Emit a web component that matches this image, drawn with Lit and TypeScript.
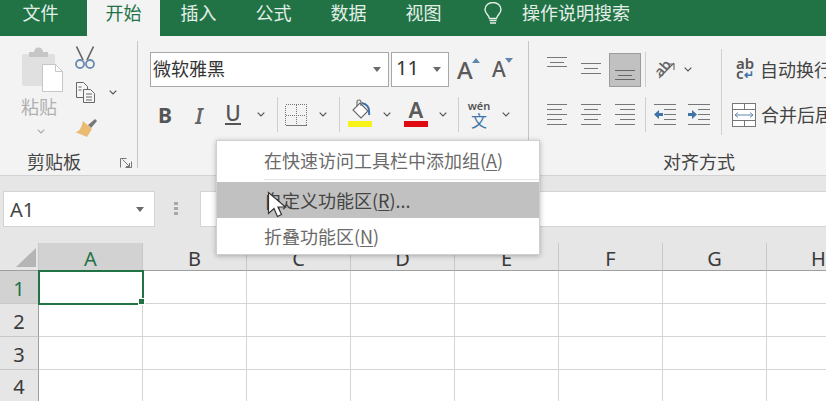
import { LitElement, html, css, svg } from "lit";
import { customElement } from "lit/decorators.js";

const chev = () => html`<svg class="chev" width="8" height="5" viewBox="0 0 8 5"><path d="M.7.7 4 4 7.3.7" fill="none" stroke="currentColor" stroke-width="1.200"/></svg>`;
const caret = () => html`<svg width="8" height="5" viewBox="0 0 8 5"><path d="M0 0h8L4 5z" fill="#6a6a6a"/></svg>`;

// Horizontal rule icons for the alignment group: each entry is [x1, x2, y]
const rules = (w: number, h: number, list: number[][], color = "#777") => html`<svg width=${w} height=${h} viewBox="0 0 ${w} ${h}" shape-rendering="crispEdges">${list.map(
  ([a, b, y]) => svg`<line x1=${a} x2=${b} y1=${y + 0.5} y2=${y + 0.5} stroke=${color}/>`
)}</svg>`;

const stack = (ys: number[], w: number, inset: number) =>
  ys.map((y, i) => [i % 2 ? inset : 0, i % 2 ? w - inset : w, y]);
const five = [0, 5, 10, 15, 20];

const arrowIndent = (dir: "l" | "r") => html`<svg width="22" height="22" viewBox="0 0 22 22" class="block">
  <g stroke="#777" shape-rendering="crispEdges">
    <line x1="0" x2="22" y1="0.500" y2="0.500"/><line x1="10" x2="22" y1="5.500" y2="5.500"/>
    <line x1="10" x2="22" y1="10.500" y2="10.500"/><line x1="10" x2="22" y1="15.500" y2="15.500"/>
    <line x1="0" x2="22" y1="20.500" y2="20.500"/>
  </g>
  ${dir === "l"
    ? svg`<path d="M0 10.500 5 6v3h4v3H5v3z" fill="#3f74a8"/>`
    : svg`<path d="M9 10.500 4 6v3H0v3h4v3z" fill="#3f74a8"/>`}
</svg>`;

@customElement("app-root")
export class AppRoot extends LitElement {
  static styles = css`
    :host { display: block; width: 826px; height: 401px; overflow: hidden; position: relative; background: #fff;
      font-family: "Noto Sans CJK SC", "Noto Sans", sans-serif; color: #444; }
    svg { display: block; flex: none; }
    .chev { color: #555; }
    .tabs { height: 36px; background: #217346; display: flex; padding-left: 4px; box-sizing: border-box; color: #e4efe8; font-size: 18px; line-height: 25px; gap: 2px; }
    .tab { width: 73px; text-align: center; }
    .tab.first { margin-right: 8px; }
    .tab.on { background: #f3f3f3; color: #217346; }
    .lamp { margin: 2px 18px 0 22px; }
    .ribbon { height: 140px; box-sizing: border-box; background: #f3f3f3; border-bottom: 1px solid #d2d2d2; padding-top: 5px; display: flex; overflow: hidden; }
    .group { height: 127px; flex: none; display: flex; flex-direction: column; box-sizing: border-box; }
    .sepr { border-right: 1px solid #c6c6c6; }
    .g1 { width: 138px; } .g2 { width: 391px; } .g3 { width: 340px; }
    .body { height: 109px; flex: none; display: flex; }
    .foot { height: 18px; line-height: 22px; font-size: 18px; text-align: center; color: #444; position: relative; }
    .g1 .foot { width: 108px; }
    .launch { position: absolute; left: 120px; top: 8px; }
    .paste { margin-left: 22px; width: 53px; padding-top: 5px; display: flex; flex-direction: column; }
    .paste span { font-size: 18px; line-height: 24px; color: #b0b0b0; margin: 1px 0 0 -1px; white-space: nowrap; }
    .paste .chev { margin: 11px 0 0 15px; color: #ababab; }
    .tools { display: flex; flex-direction: column; padding-top: 5px; gap: 12px; }
    .tool { height: 23px; display: flex; align-items: center; }
    .tool .chev { margin-left: 13px; }
    .rows { display: flex; flex-direction: column; padding-top: 11px; gap: 10px; }
    .g2 .rows { padding-left: 12px; }
    .row { display: flex; height: 35px; align-items: center; }
    .box { height: 35px; box-sizing: border-box; background: #fff; border: 1px solid #a8a8a8; display: flex; align-items: center; justify-content: space-between; padding: 0 7px 0 2px; font-size: 18px; color: #333; }
    .box span { padding-bottom: 4px; }
    .fname { width: 239px; margin-right: 2px; }
    .fsize { width: 58px; font-size: 20px; font-family: "Noto Sans", sans-serif; padding-left: 4px; }
    .big { font-family: "Noto Sans", sans-serif; font-weight: 500; color: #5a5a5a; position: relative; line-height: 35px; }
    .grow { font-size: 24px; margin-left: 8px; width: 35px; }
    .shrink { font-size: 21px; width: 24px; }
    .tri { position: absolute; top: 6px; }
    .grow .tri { left: 15px; } .shrink .tri { left: 13px; }
    .c { display: flex; align-items: center; justify-content: center; height: 35px; flex: none; }
    .w6 { width: 6px; } .w10 { width: 10px; } .w12 { width: 12px; } .w18 { width: 18px; } .w22 { width: 22px; }
    .w24 { width: 24px; } .w26 { width: 26px; } .w28 { width: 28px; } .w30 { width: 30px; } .w32 { width: 32px; }
    .w36 { width: 36px; } .w38 { width: 38px; } .w40 { width: 40px; } .w8 { width: 8px; }
    .vs { width: 1px; height: 35px; background: #cfcfcf; }
    .bt { font-family: "Noto Sans", sans-serif; font-size: 21px; color: #555; font-weight: 700; line-height: 1; padding-top: 2px; box-sizing: border-box; }
    .bi { font-family: "Noto Sans", sans-serif; font-style: italic; font-size: 21px; font-weight: 600; color: #666; padding-top: 2px; }
    .bu { font-weight: 500; border-bottom: 2px solid #555; line-height: 19px; padding-top: 0; }
    .fontA { display: flex; flex-direction: column; align-items: center; width: 24px; padding-bottom: 5px; }
    .fontA span { font-family: "Noto Sans", sans-serif; font-weight: 600; color: #5a5a5a; font-size: 22px; line-height: 24px; }
    .fontA i { display: block; width: 24px; height: 6px; background: #e00b12; }
    .fill i { display: block; width: 24px; height: 6px; background: #f7f21a; }
    .fill { display: flex; flex-direction: column; align-items: center; padding-bottom: 5px; }
    .wen { display: flex; flex-direction: column; align-items: center; line-height: 1; }
    .wen b { font-family: "Noto Sans", sans-serif; font-size: 11px; color: #555; font-weight: 600; line-height: 12px; }
    .wen span { font-size: 16px; color: #3f74a8; line-height: 17px; }
    .hi { width: 32px; height: 34px; box-sizing: border-box; background: #c1c1c1; border: 1px solid #9c9c9c; display: flex; justify-content: center; align-items: flex-start; padding-top: 0; }
    .alignL { padding-left: 8px; width: 184px; flex: none; }
    .g3sep { width: 1px; height: 86px; margin: 8px 0 0 0; background: #cfcfcf; flex: none; }
    .alignR { padding-left: 12px; }
    .alignR .row { font-size: 18px; color: #444; white-space: nowrap; }
    .alignR .row span { padding-bottom: 2px; }
    .orient { position: relative; width: 22px; height: 24px; }
    .orient span { position: absolute; left: 0; top: 1px; font: 600 14px/18px "Noto Sans", sans-serif; color: #666; transform: rotate(-50deg); padding: 0; }
    .wrapi { width: 20px; margin: 0 4px 0 2px; font: 600 15px/10px "Noto Sans", sans-serif; color: #555; padding-bottom: 2px; }
    .wrapi em { font-style: normal; color: #3f74a8; font-size: 12px; }
    .merge { margin-right: 5px; margin-left: -2px; }
    .fbar { height: 67px; box-sizing: border-box; background: #e6e6e6; padding-top: 15px; display: flex; }
    .namebox { margin-left: 3px; width: 152px; height: 36px; box-sizing: border-box; background: #fff; border: 1px solid #d4d4d4; display: flex; align-items: center; justify-content: space-between; padding: 0 10px 0 6px; font: 20px "Noto Sans", sans-serif; color: #444; }
    .dots { width: 45px; height: 36px; padding-right: 3px; box-sizing: border-box; display: flex; align-items: center; justify-content: center; }
    .finput { flex: 1; height: 36px; background: #fff; border: 1px solid #d4d4d4; border-right: 0; box-sizing: border-box; }
    .sheet { display: grid; grid-template-columns: 39px repeat(8, 104px); grid-template-rows: 28px repeat(3, 33px) 32px; position: relative; font: 20px "Noto Sans", sans-serif; }
    .h { background: #e6e6e6; color: #3a3a3a; display: flex; align-items: center; justify-content: center; box-sizing: border-box; line-height: 1; }
    .hc { border-right: 1px solid #c8c8c8; border-bottom: 1px solid #9f9f9f; padding-top: 4px; }
    .hr { border-right: 1px solid #9f9f9f; border-bottom: 1px solid #c8c8c8; padding-top: 3px; }
    .h.sel { background: #d2d2d2; color: #217346; }
    .corner { background: #e6e6e6; border-right: 1px solid #c8c8c8; border-bottom: 1px solid #9f9f9f; box-sizing: border-box; display: flex; justify-content: flex-end; align-items: flex-end; padding: 0 2px 3px 0; }
    .cell { box-sizing: border-box; border-right: 1px solid #d4d4d4; border-bottom: 1px solid #d4d4d4; }
    .selbox { position: absolute; left: 38px; top: 27px; width: 106px; height: 35px; box-sizing: border-box; border: 2px solid #217346; }
    .handle { position: absolute; right: -3px; bottom: -2px; width: 5px; height: 5px; background: #217346; border: 1px solid #fff; box-sizing: content-box; }
    .menu { position: absolute; left: 216px; top: 140px; width: 324px; height: 115px; box-sizing: border-box; background: #fff; border: 1px solid #d0d0d0; box-shadow: 0 1px 5px rgba(0,0,0,.28); font-size: 18px; color: #6a6a6a; display: flex; flex-direction: column; }
    .mi { padding-left: 47px; display: flex; align-items: center; white-space: nowrap; }
    .mi u { text-underline-offset: 2px; }
    .m1 { height: 37px; } .m2 { height: 36px; background: #c1c1c1; color: #444; } .m3 { height: 36px; }
    .msep { height: 1px; background: #e2e2e2; margin: 1px 0 2px 47px; }
    .cursor { position: absolute; left: 267px; top: 191px; }
  `;

  render() {
    const cols = ["A", "B", "C", "D", "E", "F", "G", "H"];
    return html`
      <div class="tabs">
        <div class="tab first">文件</div><div class="tab on">开始</div><div class="tab">插入</div><div class="tab">公式</div><div class="tab">数据</div><div class="tab">视图</div>
        <svg class="lamp" width="18" height="23" viewBox="0 0 18 23" fill="none" stroke="#e4efe8" stroke-width="1.400"><path d="M5.500 16.500C5 13 1 11.500 1 7.500a8 7 0 0 1 16 0c0 4-4 5.500-4.500 9z"/><path d="M5.500 18.500h7M6 21h6"/></svg>
        <div>操作说明搜索</div>
      </div>

      <div class="ribbon">
        <div class="group g1 sepr">
          <div class="body">
            <div class="paste">
              <svg width="42" height="47" viewBox="0 0 42 47"><path d="M2 8h29a2 2 0 0 1 2 2v30H2a2 2 0 0 1-2-2V10a2 2 0 0 1 2-2z" fill="#e0e0e0"/><path d="M7 6h5a4 4 0 0 1 9 0h5v5H7z" fill="#c6c6c6"/><path d="M20.500 18.500h13l7 7v20h-20z" fill="#fff" stroke="#c6c6c6"/><path d="M33.500 18.500v7h7" fill="none" stroke="#c6c6c6"/></svg>
              <span>粘贴</span>
              ${chev()}
            </div>
            <div class="tools">
              <div class="tool"><svg width="20" height="23" viewBox="0 0 20 23" fill="none"><path d="M8 14 1.500.500M12 14 18.500.500" stroke="#666" stroke-width="1.700"/><circle cx="5" cy="18" r="4" stroke="#6d8bb0" stroke-width="1.800"/><circle cx="15" cy="18" r="4" stroke="#6d8bb0" stroke-width="1.800"/></svg></div>
              <div class="tool"><svg width="21" height="23" viewBox="0 0 21 23" fill="#f6f6f6" stroke="#666"><path d="M1.500 1.500h7l4 4v11h-11z"/><path d="M8.500 8.500h7l4 4v9h-11z"/><path d="M11 13h6M11 16h6M11 19h6M3.500 6h3M3.500 9h3" fill="none"/></svg>${chev()}</div>
              <div class="tool"><svg width="23" height="21" viewBox="0 0 23 21"><path d="M13 8 20 2l2 2-6 7z" fill="#777"/><path d="M8 4l9 8-5 8-12-5c3 0 6-2 8-11z" fill="#e9bc72"/></svg></div>
            </div>
          </div>
          <div class="foot">剪贴板<svg class="launch" width="12" height="10" viewBox="0 0 12 10" fill="none" stroke="#777"><path d="M.5 9.500V.5h6M11.500 3.500v6h-6M2.500 1.500l7 7M9.500 5v3.500H6"/></svg></div>
        </div>

        <div class="group g2 sepr">
          <div class="rows">
            <div class="row">
              <div class="box fname"><span>微软雅黑</span>${caret()}</div>
              <div class="box fsize"><span>11</span>${caret()}</div>
              <div class="big grow">A<svg class="tri" width="8" height="5" viewBox="0 0 8 5"><path d="M4 0l4 5H0z" fill="#5f86ad"/></svg></div>
              <div class="big shrink">A<svg class="tri" width="8" height="5" viewBox="0 0 8 5"><path d="M0 0h8L4 5z" fill="#5f86ad"/></svg></div>
            </div>
            <div class="row">
              <div class="c w30 bt">B</div>
              <div class="c w38 bi">I</div>
              <div class="c w30"><span class="bt bu">U</span></div>
              <div class="c w26">${chev()}</div>
              <div class="c w6"><div class="vs"></div></div>
              <div class="c w32"><svg width="22" height="22" viewBox="0 0 22 22" fill="none" stroke="#777" shape-rendering="crispEdges"><rect x=".5" y=".5" width="21" height="21" stroke-dasharray="1 1"/><path d="M11 1v20M1 11h20" stroke-dasharray="1 1"/><path d="M.5 21.500h21" /></svg></div>
              <div class="c w22">${chev()}</div>
              <div class="c w10"><div class="vs"></div></div>
              <div class="c w32"><div class="fill"><svg width="24" height="23" viewBox="0 0 24 23" fill="none" stroke="#666" stroke-width="1.100"><path d="M12 5 20 13l-7 7-8-8z" fill="#fff"/><path d="M9 8V4a2 2 0 0 1 4 0v4"/><path d="M14 5c4 1 7 4 7 8 0 2 .5 2 0 4" stroke="#3f74a8" stroke-width="2"/></svg><i></i></div></div>
              <div class="c w22">${chev()}</div>
              <div class="c w36"><div class="fontA"><span>A</span><i></i></div></div>
              <div class="c w18">${chev()}</div>
              <div class="c w12"><div class="vs"></div></div>
              <div class="c w30"><div class="wen"><b>wén</b><span>文</span></div></div>
              <div class="c w24">${chev()}</div>
            </div>
          </div>
        </div>

        <div class="group g3">
          <div class="body">
            <div class="rows alignL">
              <div class="row">
                <div class="c w40">${rules(20, 35, [[0, 20, 5], [3, 17, 10], [0, 20, 14]])}</div>
                <div class="c w28">${rules(20, 35, [[0, 20, 11], [3, 17, 16], [0, 20, 21]])}</div>
                <div class="c w40"><div class="hi">${rules(20, 32, [[0, 20, 16], [3, 17, 21], [0, 20, 25]], "#666")}</div></div>
                <div class="c vs"></div>
                <div class="c w38"><div class="orient"><span>ab</span><svg width="22" height="24" viewBox="0 0 22 24" fill="none" stroke="#666"><path d="M5 21 20 6M14 7h6v6" transform="translate(0 -1)" stroke-width="1.100"/></svg></div></div>
                <div class="c w8">${chev()}</div>
              </div>
              <div class="row">
                <div class="c w40">${rules(20, 22, stack(five, 20, 0).map(([a, b, y], i) => [0, i % 2 ? 15 : 20, y]))}</div>
                <div class="c w28">${rules(20, 22, stack(five, 20, 3))}</div>
                <div class="c w40">${rules(20, 22, stack(five, 20, 0).map(([a, b, y], i) => [i % 2 ? 5 : 0, 20, y]))}</div>
                <div class="c vs"></div>
                <div class="c w38">${arrowIndent("l")}</div>
                <div class="c w30">${arrowIndent("r")}</div>
              </div>
            </div>
            <div class="g3sep"></div>
            <div class="rows alignR">
              <div class="row"><div class="wrapi">ab<br/>c<em>↵</em></div><span>自动换行</span></div>
              <div class="row"><svg class="merge" width="24" height="24" viewBox="0 0 24 24" fill="#fff" stroke="#777" shape-rendering="crispEdges"><rect x=".5" y=".5" width="23" height="23"/><path d="M.5 6.500h23M.5 17.500h23M12 .5v6M12 17.500v6" fill="none"/><path d="M3 12h18M6 9.500 3 12l3 2.500M18 9.500l3 2.500-3 2.500" fill="none" stroke="#5f86ad" shape-rendering="auto"/></svg><span>合并后居中</span></div>
            </div>
          </div>
          <div class="foot">对齐方式</div>
        </div>
      </div>

      <div class="fbar">
        <div class="namebox"><span>A1</span>${caret()}</div>
        <div class="dots"><svg width="4" height="14" viewBox="0 0 4 14" fill="#a8a8a8"><rect width="4" height="3"/><rect y="5" width="4" height="3"/><rect y="10" width="4" height="3"/></svg></div>
        <div class="finput"></div>
      </div>

      <div class="sheet">
        <div class="corner"><svg width="20" height="19" viewBox="0 0 20 19"><path d="M20 0v19H0z" fill="#b5b5b5"/></svg></div>
        ${cols.map((c, i) => html`<div class="h hc ${i === 0 ? "sel" : ""}">${c}</div>`)}
        ${[1, 2, 3, 4].map((r) => html`
          <div class="h hr ${r === 1 ? "sel" : ""}">${r}</div>
          ${cols.map(() => html`<div class="cell"></div>`)}
        `)}
        <div class="selbox"><div class="handle"></div></div>
      </div>

      <div class="menu">
        <div class="mi m1"><span>在快速访问工具栏中添加组(<u>A</u>)</span></div>
        <div class="msep"></div>
        <div class="mi m2"><span>自定义功能区(<u>R</u>)...</span></div>
        <div class="mi m3"><span>折叠功能区(<u>N</u>)</span></div>
      </div>
      <svg class="cursor" width="20" height="28" viewBox="0 0 20 28"><path d="M1.500 1.500v21l5.500-5 3.500 8 4-2-3.500-7.500h7.500z" fill="#fff" stroke="#333" stroke-width="1.200"/></svg>
    `;
  }
}
